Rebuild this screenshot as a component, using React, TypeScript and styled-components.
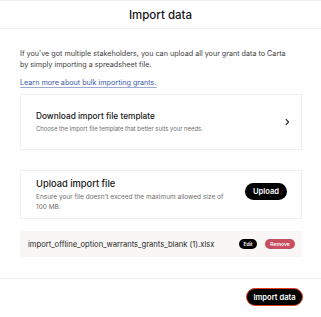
import React from "react";
import styled, { createGlobalStyle } from "styled-components";

const GlobalStyle = createGlobalStyle`
  body {
    margin: 0;
    background: #fff;
    font-family: Inter, "Noto Sans", sans-serif;
    color: #1a1a1a;
  }
`;

const Modal = styled.div`
  width: 321px;
  height: 317px;
  display: flex;
  flex-direction: column;
  border-top: 1px solid #eceef1;
  box-sizing: border-box;
`;

const Header = styled.div`
  height: 27px;
  display: flex;
  align-items: center;
  justify-content: center;
  border-bottom: 1px solid #eceef1;
  font-size: 11.5px;
  font-weight: 500;
  color: #161616;
`;

const Body = styled.div`
  flex: 1;
  padding: 19px 19px 0 20px;
  display: flex;
  flex-direction: column;
`;

const Intro = styled.p`
  margin: 0;
  max-width: 275px;
  font-size: 7.2px;
  line-height: 11px;
  color: #3c3c3c;
`;

const Link = styled.a`
  margin-top: 7px;
  font-size: 7.2px;
  line-height: 11px;
  color: #3b5aa8;
  text-decoration: underline;
  text-decoration-color: #9aaad3;
  text-underline-offset: 1.5px;
`;

const Card = styled.div<{ $height: number; $gap: number }>`
  margin-top: ${(p) => p.$gap}px;
  height: ${(p) => p.$height}px;
  box-sizing: border-box;
  border: 1px solid #f0f0f0;
  padding: 0 15px;
  display: flex;
  align-items: center;
  justify-content: space-between;
  gap: 12px;
`;

const CardText = styled.div<{ $gap: number }>`
  display: flex;
  flex-direction: column;
  gap: ${(p) => p.$gap}px;
`;

const CardTitle = styled.div<{ $size: number }>`
  font-size: ${(p) => p.$size}px;
  font-weight: 500;
  color: #161616;
`;

const CardSub = styled.div<{ $size: number }>`
  font-size: ${(p) => p.$size}px;
  line-height: 10px;
  color: #6e6e6e;
  max-width: 196px;
`;

const Chevron = styled.svg`
  width: 8px;
  height: 8px;
  margin-right: -5px;
`;

const Pill = styled.button<{ $variant: "dark" | "danger" }>`
  border: none;
  border-radius: 999px;
  font-family: inherit;
  font-weight: 600;
  color: #fff;
  background: ${(p) => (p.$variant === "danger" ? "#c84d5e" : "#000")};
  padding: 0;
  cursor: pointer;
`;

const UploadButton = styled(Pill)`
  width: 42px;
  height: 17px;
  font-size: 7.6px;
  margin-right: -1px;
  margin-bottom: 6px;
`;

const FileRow = styled.div`
  margin-top: 12px;
  height: 26px;
  background: #f8f7f5;
  padding: 0 7px 0 8px;
  display: flex;
  align-items: center;
  gap: 8px;
`;

const FileName = styled.div`
  flex: 1;
  font-size: 7.6px;
  color: #1f1f1f;
`;

const SmallButton = styled(Pill)<{ $width: number }>`
  width: ${(p) => p.$width}px;
  height: 10px;
  font-size: 5px;
`;

const Footer = styled.div`
  height: 38px;
  border-top: 1px solid #f0f1f3;
  display: flex;
  align-items: center;
  justify-content: flex-end;
  padding: 0 18px 0 0;
`;

const PrimaryButton = styled(Pill)`
  width: 57px;
  height: 18px;
  font-size: 7.6px;
  border: 1.5px solid #e8391f;
  box-sizing: border-box;
  margin-bottom: 2px;
`;

export default function App() {
  return (
    <>
      <GlobalStyle />
      <Modal>
        <Header>Import data</Header>
        <Body>
          <Intro>
            If you've got multiple stakeholders, you can upload all your grant
            data to Carta by simply importing a spreadsheet file.
          </Intro>
          <Link href="#">Learn more about bulk importing grants.</Link>
          <Card $height={56} $gap={6}>
            <CardText $gap={3}>
              <CardTitle $size={8.3}>Download import file template</CardTitle>
              <CardSub $size={5.9}>
                Choose the import file template that better suits your needs.
              </CardSub>
            </CardText>
            <Chevron viewBox="0 0 8 8">
              <path
                d="M2.8 1.2 L5.6 4 L2.8 6.8"
                fill="none"
                stroke="#222"
                strokeWidth="1.1"
              />
            </Chevron>
          </Card>
          <Card $height={49} $gap={20}>
            <CardText $gap={3}>
              <CardTitle $size={9.3}>Upload import file</CardTitle>
              <CardSub $size={6.5}>
                Ensure your file doesn’t exceed the maximum allowed size of 100
                MB.
              </CardSub>
            </CardText>
            <UploadButton $variant="dark">Upload</UploadButton>
          </Card>
          <FileRow>
            <FileName>import_offline_option_warrants_grants_blank (1).xlsx</FileName>
            <SmallButton $variant="dark" $width={18}>
              Edit
            </SmallButton>
            <SmallButton $variant="danger" $width={30}>
              Remove
            </SmallButton>
          </FileRow>
        </Body>
        <Footer>
          <PrimaryButton $variant="dark">Import data</PrimaryButton>
        </Footer>
      </Modal>
    </>
  );
}
